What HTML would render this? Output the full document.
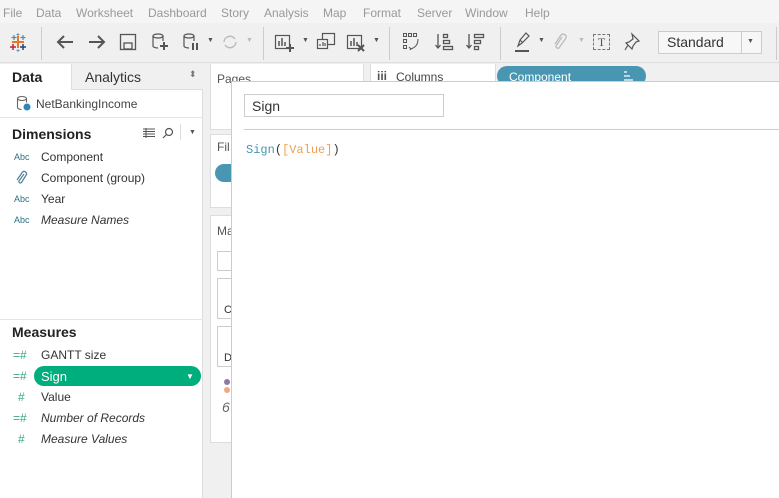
<!DOCTYPE html>
<html><head><meta charset="utf-8"><style>
*{margin:0;padding:0;box-sizing:border-box}
body{width:779px;height:498px;overflow:hidden;background:#f0f0f0;font-family:"Liberation Sans",sans-serif;font-size:12px;color:#333;position:relative}
.a{position:absolute}
.menu span{position:absolute;top:6px;color:#999;font-size:12px}
.gl{position:absolute;color:#555}
.it{position:absolute;left:41px;font-size:12px;color:#333}
.ic{position:absolute;font-size:9px;color:#2e6f86;left:14px}
.hs{position:absolute;color:#3aa585;font-size:12px}
svg.a{overflow:visible}
</style></head><body>
<div class="a" style="left:0;top:0;width:779px;height:23px;background:#f5f5f5"></div>
<div class="menu">
<span style="left:3px">File</span><span style="left:36px">Data</span><span style="left:76px">Worksheet</span><span style="left:148px">Dashboard</span><span style="left:221px">Story</span><span style="left:264px">Analysis</span><span style="left:323px">Map</span><span style="left:363px">Format</span><span style="left:417px">Server</span><span style="left:465px">Window</span><span style="left:525px">Help</span>
</div>
<div class="a" style="left:0;top:23px;width:779px;height:40px;background:#f0f0f0;border-bottom:1px solid #ddd"></div>
<!-- logo -->
<svg class="a" style="left:8px;top:32px" width="20" height="20"><path d="M10 4v12M4 10h12" stroke="#e8762d" stroke-width="2"/><path d="M6 3v5M3.5 5.5h5M15 3v5M12.5 5.5h5" stroke="#5b879b" stroke-width="1.2"/><path d="M5 12v6M2 15h6" stroke="#c72037" stroke-width="1.5"/><path d="M15 12v6M12 15h6" stroke="#1f457e" stroke-width="1.5"/><path d="M10 1v3M8.5 2.5h3M10 17v3M8.5 18.5h3" stroke="#7099a6" stroke-width="1"/></svg>
<div class="a" style="left:41px;top:27px;width:1px;height:33px;background:#ccc"></div>
<svg class="a" style="left:55px;top:34px" width="20" height="16" fill="none" stroke="#555" stroke-width="2"><path d="M18 8H3M9 2L3 8l6 6"/></svg>
<svg class="a" style="left:87px;top:34px" width="20" height="16" fill="none" stroke="#555" stroke-width="2"><path d="M2 8h15M11 2l6 6-6 6"/></svg>
<svg class="a" style="left:120px;top:34px" width="16" height="16" fill="none" stroke="#555" stroke-width="1.3"><rect x="0.5" y="0.5" width="15" height="15"/><rect x="4" y="9" width="8" height="6"/></svg>
<svg class="a" style="left:152px;top:33px" width="16" height="18" fill="none" stroke="#555" stroke-width="1.2"><ellipse cx="6" cy="3" rx="5" ry="2"/><path d="M1 3v10c0 1 2 2 5 2M11 3v5"/><path d="M12 9v8M8 13h8" stroke-width="2"/></svg>
<svg class="a" style="left:183px;top:33px" width="16" height="18" fill="none" stroke="#555" stroke-width="1.2"><ellipse cx="6" cy="3" rx="5" ry="2"/><path d="M1 3v10c0 1 2 2 5 2M11 3v5"/><path d="M10 10v7M14 10v7" stroke-width="2"/></svg>
<div class="gl" style="left:207px;top:37px;font-size:7px">▼</div>
<svg class="a" style="left:221px;top:33px" width="18" height="18" fill="none" stroke="#bbb" stroke-width="1.5"><path d="M3 9a6 6 0 0 1 11-3M15 9a6 6 0 0 1-11 3"/></svg>
<div class="gl" style="left:246px;top:37px;font-size:7px;color:#bbb">▼</div>
<div class="a" style="left:263px;top:27px;width:1px;height:33px;background:#ccc"></div>
<svg class="a" style="left:275px;top:33px" width="20" height="19" fill="none" stroke="#555" stroke-width="1.2"><rect x="0.5" y="2.5" width="14" height="13"/><path d="M4 13V8M7 13V5M10 13V9" stroke-width="1.5"/><path d="M15 11v8M11 15h8" stroke-width="2"/></svg>
<div class="gl" style="left:302px;top:37px;font-size:7px">▼</div>
<svg class="a" style="left:317px;top:33px" width="18" height="17" fill="none" stroke="#555" stroke-width="1.2"><rect x="5.5" y="0.5" width="12" height="11"/><rect x="0.5" y="6.5" width="10" height="9" fill="#f0f0f0"/><path d="M3 13v-2M6 13V9M8 13v-3"/></svg>
<svg class="a" style="left:347px;top:33px" width="18" height="19" fill="none" stroke="#555" stroke-width="1.2"><rect x="0.5" y="2.5" width="14" height="13"/><path d="M4 13V8M7 13V5M10 13V9" stroke-width="1.5"/><path d="M11 12l6 6M17 12l-6 6" stroke-width="2"/></svg>
<div class="gl" style="left:373px;top:37px;font-size:7px">▼</div>
<div class="a" style="left:389px;top:27px;width:1px;height:33px;background:#ccc"></div>
<svg class="a" style="left:403px;top:33px" width="18" height="18" fill="none" stroke="#555" stroke-width="1"><rect x="0.5" y="0.5" width="3" height="3"/><rect x="5.5" y="0.5" width="3" height="3"/><rect x="10.5" y="0.5" width="3" height="3"/><rect x="0.5" y="6.5" width="3" height="3"/><rect x="0.5" y="12.5" width="3" height="3"/><path d="M15 6c0 6-3 9-8 10M6 14l2 2-1 1"/></svg>
<svg class="a" style="left:435px;top:33px" width="18" height="18" fill="none" stroke="#555" stroke-width="1.3"><path d="M3 1v14M0.5 12l2.5 3 2.5-3"/><rect x="8.5" y="1.5" width="4" height="3"/><rect x="8.5" y="7.5" width="6" height="3"/><rect x="8.5" y="13.5" width="9" height="3"/></svg>
<svg class="a" style="left:466px;top:33px" width="18" height="18" fill="none" stroke="#555" stroke-width="1.3"><path d="M3 1v14M0.5 12l2.5 3 2.5-3"/><rect x="8.5" y="1.5" width="9" height="3"/><rect x="8.5" y="7.5" width="6" height="3"/><rect x="8.5" y="13.5" width="4" height="3"/></svg>
<div class="a" style="left:500px;top:27px;width:1px;height:33px;background:#ccc"></div>
<svg class="a" style="left:515px;top:32px" width="16" height="20" fill="none" stroke="#555" stroke-width="1.2"><path d="M3 14l2-6 6-7 3 3-7 7zM5 8l3 3"/><path d="M0 19h14" stroke-width="2"/></svg>
<div class="gl" style="left:538px;top:37px;font-size:7px">▼</div>
<svg class="a" style="left:553px;top:33px" width="14" height="18" fill="none" stroke="#bbb" stroke-width="1.3"><path d="M9 4L3 13a2 2 0 0 0 3 2l7-10a3 3 0 0 0-5-3L2 11"/></svg>
<div class="gl" style="left:578px;top:37px;font-size:7px;color:#bbb">▼</div>
<div class="a" style="left:593px;top:34px;width:17px;height:16px;border:1px dashed #777;font-size:12px;text-align:center;line-height:14px;color:#555;font-family:'Liberation Serif',serif">T</div>
<svg class="a" style="left:624px;top:33px" width="16" height="18" fill="none" stroke="#555" stroke-width="1.2"><path d="M8 1l7 7-3 1-3 4-1 3-6-6 3-1 4-3zM4 12l-3 5"/></svg>
<div class="a" style="left:658px;top:31px;width:104px;height:23px;border:1px solid #ccc;background:#f7f7f7;font-size:14px;padding:2px 8px;color:#333">Standard</div>
<div class="a" style="left:741px;top:32px;width:1px;height:21px;background:#ccc"></div>
<div class="gl" style="left:747px;top:38px;font-size:7px">▼</div>
<div class="a" style="left:776px;top:27px;width:1px;height:33px;background:#ccc"></div>
<!-- left pane -->
<div class="a" style="left:0;top:64px;width:203px;height:434px;background:#fff;border-right:1px solid #ddd"></div>
<div class="a" style="left:71px;top:64px;width:132px;height:26px;background:#f0f0f0;border-left:1px solid #ddd;border-bottom:1px solid #ddd"></div>
<div class="a" style="left:12px;top:69px;font-size:14px;font-weight:bold;color:#222">Data</div>
<div class="a" style="left:85px;top:69px;font-size:14px;color:#333">Analytics</div>
<div class="a" style="left:189px;top:69px;font-size:9px;color:#777">⬍</div>
<svg class="a" style="left:17px;top:96px" width="14" height="15" fill="none" stroke="#666" stroke-width="1.1"><ellipse cx="5" cy="2.5" rx="4.5" ry="2"/><path d="M0.5 2.5v9c0 1 2 2 4 2M9.5 2.5v4"/><circle cx="10" cy="11" r="3.5" fill="#2e87b5" stroke="none"/></svg>
<div class="a" style="left:36px;top:97px;font-size:12px;color:#444">NetBankingIncome</div>
<div class="a" style="left:0;top:117px;width:203px;height:1px;background:#e4e4e4"></div>
<div class="a" style="left:12px;top:126px;font-size:14px;font-weight:bold;color:#222">Dimensions</div>
<svg class="a" style="left:143px;top:128px" width="12" height="10" fill="none" stroke="#555" stroke-width="1"><path d="M0 1h12M0 3.5h12M0 6h12M0 8.5h12M3 0v10"/></svg>
<svg class="a" style="left:162px;top:127px" width="12" height="12" fill="none" stroke="#555" stroke-width="1.2"><circle cx="7" cy="5" r="3.5"/><path d="M4.5 7.5L1 11"/></svg>
<div class="a" style="left:180px;top:124px;width:1px;height:16px;background:#ddd"></div>
<div class="gl" style="left:189px;top:129px;font-size:7px">▼</div>
<div class="ic" style="top:152px">Abc</div><div class="it" style="top:150px">Component</div>
<svg class="a" style="left:16px;top:171px" width="12" height="14" fill="none" stroke="#4a7f96" stroke-width="1.2"><path d="M8 3L3 10a1.5 1.5 0 0 0 2.5 1.5l5-8a2.5 2.5 0 0 0-4-2.5L1 9"/></svg>
<div class="it" style="top:171px">Component (group)</div>
<div class="ic" style="top:194px">Abc</div><div class="it" style="top:192px">Year</div>
<div class="ic" style="top:215px">Abc</div><div class="it" style="top:213px;font-style:italic">Measure Names</div>
<div class="a" style="left:0;top:319px;width:203px;height:1px;background:#e4e4e4"></div>
<div class="a" style="left:12px;top:324px;font-size:14px;font-weight:bold;color:#222">Measures</div>
<div class="hs" style="left:13px;top:348px">=#</div><div class="it" style="top:348px">GANTT size</div>
<div class="hs" style="left:13px;top:369px">=#</div>
<div class="a" style="left:34px;top:366px;width:167px;height:20px;border-radius:10px;background:#00ad7c"></div>
<div class="it" style="top:369px;color:#fff;font-size:13px">Sign</div>
<div class="a" style="left:186px;top:372px;font-size:8px;color:#fff">▼</div>
<div class="hs" style="left:18px;top:390px">#</div><div class="it" style="top:390px">Value</div>
<div class="hs" style="left:13px;top:411px">=#</div><div class="it" style="top:411px;font-style:italic">Number of Records</div>
<div class="hs" style="left:18px;top:432px">#</div><div class="it" style="top:432px;font-style:italic">Measure Values</div>
<!-- middle cards -->
<div class="a" style="left:210px;top:64px;width:154px;height:66px;background:#fff;border:1px solid #ddd;border-top:none"></div>
<div class="a" style="left:217px;top:72px;color:#555">Pages</div>
<div class="a" style="left:210px;top:134px;width:30px;height:74px;background:#fff;border:1px solid #ddd"></div>
<div class="a" style="left:217px;top:140px;color:#555">Fil</div>
<div class="a" style="left:215px;top:164px;width:24px;height:18px;border-radius:9px;background:#4996b2"></div>
<div class="a" style="left:210px;top:215px;width:30px;height:228px;background:#fff;border:1px solid #ddd"></div>
<div class="a" style="left:217px;top:224px;color:#555">Ma</div>
<div class="a" style="left:217px;top:251px;width:20px;height:20px;border:1px solid #ccc"></div>
<div class="a" style="left:217px;top:278px;width:20px;height:41px;border:1px solid #ccc"></div>
<div class="a" style="left:224px;top:304px;font-size:11px">C</div>
<div class="a" style="left:217px;top:326px;width:20px;height:41px;border:1px solid #ccc"></div>
<div class="a" style="left:224px;top:352px;font-size:11px">D</div>
<div class="a" style="left:224px;top:379px;width:6px;height:6px;border-radius:3px;background:#8d7ba5"></div>
<div class="a" style="left:224px;top:387px;width:6px;height:6px;border-radius:3px;background:#f0a97f"></div>
<div class="a" style="left:222px;top:399px;font-size:14px;color:#666;font-style:italic">6</div>
<div class="a" style="left:370px;top:64px;width:126px;height:18px;background:#fff;border-left:1px solid #ddd;border-right:1px solid #ddd"></div>
<div class="a" style="left:377px;top:69px;color:#555;font-weight:bold">iii</div>
<div class="a" style="left:396px;top:70px;color:#444">Columns</div>
<div class="a" style="left:497px;top:66px;width:149px;height:20px;border-radius:10px;background:#4996b2"></div>
<div class="a" style="left:509px;top:70px;color:#fff;font-size:12px">Component</div>
<svg class="a" style="left:623px;top:70px" width="10" height="10" fill="none" stroke="#fff" stroke-width="1.2"><path d="M1 2h3M1 6h6M1 10h9"/></svg>
<!-- dialog -->
<div class="a" style="left:231px;top:81px;width:548px;height:417px;background:#fff;border-left:1px solid #ccc;border-top:1px solid #ccc"></div>
<div class="a" style="left:244px;top:94px;width:200px;height:23px;border:1px solid #ccc;font-size:14px;padding:3px 7px;color:#333">Sign</div>
<div class="a" style="left:244px;top:129px;width:535px;height:1px;background:#ccc"></div>
<div class="a" style="left:246px;top:143px;font-family:'Liberation Mono',monospace;font-size:12px"><span style="color:#4996b2">Sign</span><span style="color:#333">(</span><span style="color:#f0a050">[Value]</span><span style="color:#333">)</span></div>
</body></html>
